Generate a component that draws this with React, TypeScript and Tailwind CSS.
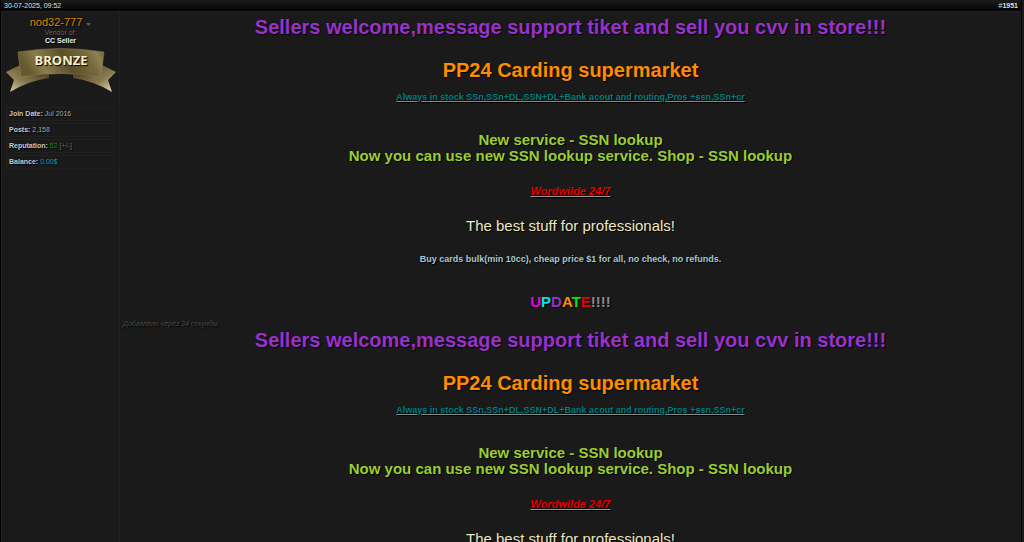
interface Letter {
  char: string;
  color: string;
}

const updateLetters: Letter[] = [
  { char: "U", color: "text-[#e800e8]" },
  { char: "P", color: "text-[#00e5e8]" },
  { char: "D", color: "text-[#9932cc]" },
  { char: "A", color: "text-[#ff8c00]" },
  { char: "T", color: "text-[#00e800]" },
  { char: "E", color: "text-[#e80000]" },
];

const BronzeRibbon = () => (
  <svg viewBox="0 0 110 46" className="h-[46px] w-[110px]" aria-label="BRONZE">
    <defs>
      <linearGradient id="band" x1="0" y1="0.2" x2="1" y2="0">
        <stop offset="0" stopColor="#65592f" />
        <stop offset="0.2" stopColor="#8b7d4e" />
        <stop offset="0.5" stopColor="#5c5029" />
        <stop offset="0.75" stopColor="#75683c" />
        <stop offset="0.88" stopColor="#8f8155" />
        <stop offset="1" stopColor="#6b5e36" />
      </linearGradient>
      <linearGradient id="leftTail" x1="0" y1="1" x2="0.9" y2="0.2">
        <stop offset="0" stopColor="#e0d6a8" />
        <stop offset="0.45" stopColor="#8a7c50" />
        <stop offset="1" stopColor="#4d4322" />
      </linearGradient>
      <linearGradient id="rightTail" x1="1" y1="1" x2="0.1" y2="0.2">
        <stop offset="0" stopColor="#f0e8bf" />
        <stop offset="0.45" stopColor="#8a7c50" />
        <stop offset="1" stopColor="#4d4322" />
      </linearGradient>
    </defs>
    <path d="M0 25L14 18L43 26V31Q22 34 4 45L8 33Z" fill="url(#leftTail)" />
    <path d="M110 25L96 18L67 26V31Q88 34 106 45L102 33Z" fill="url(#rightTail)" />
    <path d="M15 29Q29 27 43 26V28Z" fill="#3a3118" />
    <path d="M95 29Q81 27 67 26V28Z" fill="#3a3118" />
    <path
      d="M12 5Q55 -2 98 5L95 30Q55 23 15 30Z"
      fill="url(#band)"
      stroke="#95875a"
      strokeWidth="0.5"
    />
    <text
      x="55"
      y="18"
      textAnchor="middle"
      fontFamily="'Open Sans', sans-serif"
      fontSize="13"
      fontWeight="700"
      fill="#f5efcb"
    >
      BRONZE
    </text>
  </svg>
);

const Advert = () => (
  <div className="text-center font-bold">
    <h2 className="text-[20px] leading-6 text-[#9932cc]">
      Sellers welcome,message support tiket and sell you cvv in store!!!
    </h2>
    <h3 className="mt-[19px] text-[20px] leading-6 text-[#ff8c00]">
      PP24 Carding supermarket
    </h3>
    <p className="mt-[9px] text-[9px] leading-3 text-[#008080] underline decoration-[#8a8a8a]">
      Always in stock SSn,SSn+DL,SSN+DL+Bank acout and routing,Pros +ssn,SSn+cr
    </p>
    <p className="mt-[29px] text-[15px] leading-4 text-[#9acd32]">
      New service - SSN lookup
      <br />
      Now you can use new SSN lookup service. Shop - SSN lookup
    </p>
    <p className="mt-[21px] text-[11px] leading-3 text-[#e80000] italic underline decoration-[#9a9a9a]">
      Wordwilde 24/7
    </p>
    <p className="mt-[21px] text-[15px] leading-4 font-normal text-[#eee8c0]">
      The best stuff for professionals!
    </p>
    <p className="mt-[19px] text-[9px] leading-3 text-[#a5c8d2]">
      Buy cards bulk(min 10cc), cheap price $1 for all, no check, no refunds.
    </p>
    <p className="mt-[29px] text-[15px] leading-4 text-[#8a8a8a]">
      {updateLetters.map((letter) => (
        <span key={letter.char} className={letter.color}>
          {letter.char}
        </span>
      ))}
      !!!!
    </p>
  </div>
);

const stats = [
  { label: "Join Date:", value: "Jul 2016", color: "text-[#a5a5a5]" },
  { label: "Posts:", value: "2,158", color: "text-[#a5a5a5]" },
  { label: "Reputation:", value: "52", color: "text-[#009a00]", extra: "[+/-]" },
  { label: "Balance:", value: "0.00$", color: "text-[#00a5c8]" },
];

const App = () => {
  return (
    <div className="h-screen overflow-hidden bg-[#1a1a1a] pr-0.5 font-['Liberation_Sans',Arial,sans-serif] text-[#8a8a8a] [text-shadow:1px_1px_1px_#000]">
      <article className="flex min-h-full flex-col border-r border-l border-r-black border-l-black">
        <header className="flex h-3 items-center justify-between border-b border-[#222] bg-linear-to-b from-[#1c1c1c] to-[#050505] px-[3px] text-[7px] leading-[10px] text-[#e0e0e0]">
          <time>30-07-2025, 09:52</time>
          <a href="#1951" className="font-bold">
            <span className="font-normal">#</span>1951
          </a>
        </header>

        <div className="flex grow">
          {/* Seller info */}
          <aside className="w-[119px] shrink-0 border-r border-l border-[#202020] px-[3px] pt-1">
            <div className="flex flex-col items-center">
              <a
                href="#nod32-777"
                className="flex items-center gap-1 text-[11px] leading-[13px] text-[#e08000]"
              >
                nod32-777
                <svg viewBox="0 0 5 3" className="mt-1 h-[3px] w-[5px]">
                  <path d="M0 0H5L2.5 3Z" fill="#5a5a5a" />
                </svg>
              </a>
              <span className="text-[7px] leading-2 text-[#686868]">
                Vendor of:
              </span>
              <span className="text-[7px] leading-2 font-bold text-[#eee]">
                CC Seller
              </span>
              <div className="mt-0.5">
                <BronzeRibbon />
              </div>
            </div>

            <ul className="mt-[14px] space-y-0.5 px-px">
              {stats.map((stat) => (
                <li
                  key={stat.label}
                  className="border border-[#202020] px-0.5 text-[7px] leading-3 text-[#6a6a6a]"
                >
                  <strong className="text-[#c8c8c8]">{stat.label}</strong>{" "}
                  <span className={stat.color}>{stat.value}</span>{" "}
                  {stat.extra}
                </li>
              ))}
            </ul>
          </aside>

          {/* Message body */}
          <div className="min-w-0 grow px-[3px] pt-[3px]">
            <Advert />
            <p className="mt-[10px] text-[7px] leading-2 text-[#4a4a4a] italic">
              Добавлено через 34 секунды
            </p>
            <Advert />
          </div>
        </div>
      </article>
    </div>
  );
};

export default App;
